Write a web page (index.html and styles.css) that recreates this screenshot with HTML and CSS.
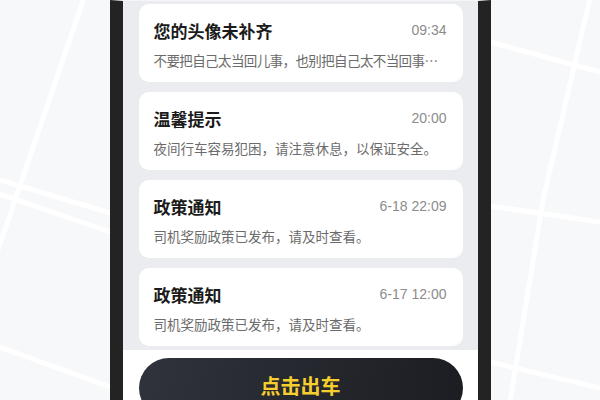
FILE: index.html
```html
<!DOCTYPE html>
<html lang="zh-CN">
<head>
  <meta charset="UTF-8">
  <meta name="viewport" content="width=device-width, initial-scale=1.0">
  <title>消息通知</title>
  <link rel="stylesheet" href="styles.css">
</head>
<body>
  <svg class="map-bg" width="600" height="400" viewBox="0 0 600 400" aria-hidden="true">
    <g stroke="#ffffff" stroke-width="5" fill="none">
      <line x1="84" y1="-2" x2="-2" y2="250"/>
      <line x1="0" y1="180" x2="110" y2="213"/>
      <line x1="0" y1="194" x2="110" y2="232"/>
      <line x1="0" y1="347" x2="110" y2="387"/>
      <polyline points="590,-2 543,200 510,402"/>
      <line x1="490" y1="42" x2="600" y2="72"/>
      <line x1="490" y1="206" x2="600" y2="222"/>
      <line x1="490" y1="362" x2="600" y2="388"/>
    </g>
  </svg>

  <div class="phone">
    <div class="notice-list">
      <div class="notice-card">
        <div class="notice-head">
          <span class="notice-title">您的头像未补齐</span>
          <span class="notice-time">09:34</span>
        </div>
        <div class="notice-text tight">不要把自己太当回儿事，也别把自己太不当回事…</div>
      </div>
      <div class="notice-card">
        <div class="notice-head">
          <span class="notice-title">温馨提示</span>
          <span class="notice-time">20:00</span>
        </div>
        <div class="notice-text">夜间行车容易犯困，请注意休息，以保证安全。</div>
      </div>
      <div class="notice-card">
        <div class="notice-head">
          <span class="notice-title">政策通知</span>
          <span class="notice-time">6-18 22:09</span>
        </div>
        <div class="notice-text">司机奖励政策已发布，请及时查看。</div>
      </div>
      <div class="notice-card">
        <div class="notice-head">
          <span class="notice-title">政策通知</span>
          <span class="notice-time">6-17 12:00</span>
        </div>
        <div class="notice-text">司机奖励政策已发布，请及时查看。</div>
      </div>
    </div>
    <div class="bottom-bar">
      <button class="go-btn">点击出车</button>
    </div>
  </div>
</body>
</html>
```

FILE: styles.css
```css
body {
  margin: 0;
  width: 600px;
  height: 400px;
  overflow: hidden;
  background: #f7f8fa;
  display: flex;
  justify-content: center;
  position: relative;
  font-family: "Noto Sans CJK SC", "Liberation Sans", sans-serif;
}

.map-bg {
  position: absolute;
  left: 0;
  top: 0;
}

.phone {
  position: relative;
  width: 355px;
  height: 400px;
  border-left: 13px solid #232323;
  border-right: 13px solid #232323;
  background: #ebecf0;
  display: flex;
  flex-direction: column;
  overflow: hidden;
  border-top: 1px solid #f6f6f8;
}

.notice-list {
  display: flex;
  flex-direction: column;
  gap: 10px;
  padding: 3px 15px 0 16px;
}

.notice-card {
  background: #fff;
  border-radius: 10px;
  height: 78px;
  box-sizing: border-box;
  padding: 13px 16px 0 15px;
}

.notice-head {
  display: flex;
  justify-content: space-between;
  align-items: center;
  height: 26px;
}

.notice-title {
  font-size: 17px;
  font-weight: bold;
  color: #1b1b1b;
}

.notice-time {
  font-family: "Liberation Sans", "Noto Sans CJK SC", sans-serif;
  font-size: 14px;
  color: #8c8c8c;
}

.notice-text {
  margin-top: 7px;
  font-size: 13.5px;
  color: #6b6b6b;
  white-space: nowrap;
}

.notice-text.tight {
  letter-spacing: -0.6px;
}

.bottom-bar {
  margin-top: 4px;
  flex: 1;
  background: #fff;
  padding: 8px 15px 0 16px;
}

.go-btn {
  display: block;
  width: 100%;
  height: 60px;
  border: none;
  border-radius: 30px;
  background: linear-gradient(100deg, #30333c 0%, #1c1d22 100%);
  color: #f6cf2e;
  font-family: "Noto Sans CJK SC", sans-serif;
  font-size: 20px;
  font-weight: bold;
  padding: 0 0 5px;
}
```
